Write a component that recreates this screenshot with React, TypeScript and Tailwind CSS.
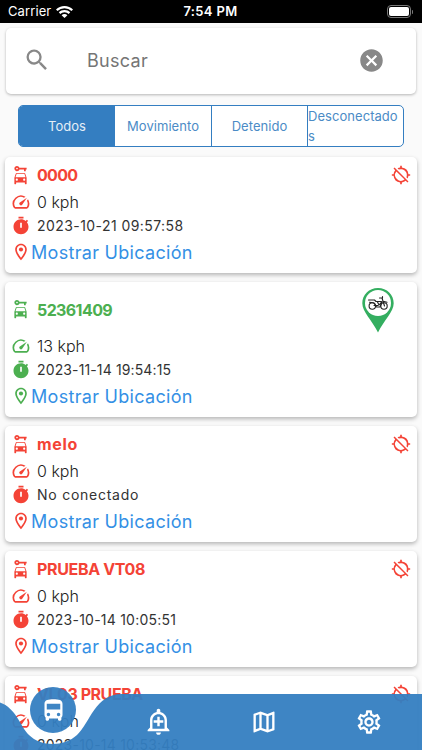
import React from 'react';
import {
    MdSearch,
    MdCancel,
    MdCarRental,
    MdSpeed,
    MdOutlineLocationOn,
    MdLocationDisabled,
    MdDirectionsBus,
    MdOutlineAddAlert,
    MdOutlineMap,
    MdOutlineSettings,
} from 'react-icons/md';

type Device = {
    name: string;
    speed: string;
    date: string;
    online?: boolean;
    nameTracking: string;
    dateTracking: string;
};

const devices: Device[] = [
    { name: '0000', speed: '0 kph', date: '2023-10-21 09:57:58', nameTracking: 'tracking-[-0.7px]', dateTracking: 'tracking-[0.43px]' },
    { name: '52361409', speed: '13 kph', date: '2023-11-14 19:54:15', online: true, nameTracking: 'tracking-[-0.6px]', dateTracking: 'tracking-[0.13px]' },
    { name: 'melo', speed: '0 kph', date: 'No conectado', nameTracking: 'tracking-[0.7px]', dateTracking: 'tracking-[0.75px]' },
    { name: 'PRUEBA VT08', speed: '0 kph', date: '2023-10-14 10:05:51', nameTracking: 'tracking-[-0.35px]', dateTracking: 'tracking-[0.23px]' },
    { name: 'VL03 PRUEBA', speed: '0 kph', date: '2023-10-14 10:53:48', nameTracking: 'tracking-[-0.45px]', dateTracking: 'tracking-[0.23px]' },
];

const TimerIcon: React.FC = () => (
    <svg viewBox="0 0 24 24" className="h-[20px] w-[20px]" fill="currentColor">
        <path d="M9 1h6v2H9zM19.03 7.39l1.42-1.42c-.43-.51-.9-.99-1.41-1.41l-1.42 1.42C16.07 4.74 14.12 4 12 4c-4.97 0-9 4.03-9 9s4.02 9 9 9 9-4.03 9-9c0-2.12-.74-4.07-1.97-5.61zM13 14h-2V8h2v6z" />
    </svg>
);

// Green map pin with a motorbike inside
const BikePin: React.FC = () => (
    <svg viewBox="0 0 34 46" className="h-[46px] w-[34px]">
        <path d="M17 1C8 1 1.300 7.800 1.300 16.200 1.300 25 11 33 17 45.500 23 33 32.700 25 32.700 16.200 32.700 7.800 26 1 17 1Z" fill="#34ae60" />
        <circle cx="17" cy="16" r="13" fill="#fff" />
        <g fill="none" stroke="#222" strokeWidth="1.100" strokeLinecap="round" strokeLinejoin="round">
            <circle cx="11.300" cy="19" r="3.200" />
            <circle cx="23" cy="19" r="3.200" />
            <path d="M7.500 13h6l1.500 1.500h5.500M8.500 15.200l4.500.8 2.500 4h3.500l2-5M18.500 11h3v-1.500M21 11l2.500 8M13 18.500h4M16.500 15l1.500 3 2.500-3M23 14.500l3 .8" />
        </g>
    </svg>
);

const StatusBar: React.FC = () => (
    <div className="grid h-[23px] grid-cols-3 items-center bg-black pl-2 pr-[9px] text-[13px] text-white">
        <div className="flex items-center gap-[5px]">
            <span className="tracking-[0.1px]">Carrier</span>
            <svg viewBox="0 0 17 12" className="h-[12px] w-[17px]" fill="#fff">
                <path d="M8.500 0C5.200 0 2.200 1.300 0 3.400l1.500 1.600a10 10 0 0 1 14 0L17 3.400C14.800 1.300 11.800 0 8.500 0Z" />
                <path d="M8.500 4C6.300 4 4.300 4.900 2.800 6.300l1.500 1.600a6.100 6.100 0 0 1 8.400 0l1.500-1.600C12.700 4.900 10.700 4 8.500 4Z" />
                <path d="M8.500 8c-1.100 0-2.100.4-2.900 1.200L8.500 12l2.900-2.800C10.600 8.400 9.600 8 8.500 8Z" />
            </svg>
        </div>
        <span className="text-center font-semibold tracking-[0.35px]">7:54 PM</span>
        <div className="flex items-center justify-end gap-px">
            <div className="h-[13px] w-[24px] rounded-[4px] border border-[#777] p-[1px]">
                <div className="h-full w-full rounded-[2px] bg-white" />
            </div>
            <div className="h-[4px] w-[1px] rounded-r bg-[#777]" />
        </div>
    </div>
);

const FilterTabs: React.FC = () => (
    <div className="mx-[18px] mt-[11px] grid h-[42px] grid-cols-4 overflow-hidden rounded-[5px] border border-[#347ec1] bg-white text-[13px] leading-[20px] tracking-[0.05px] text-[#4b8bc6]">
        <div className="flex items-center justify-center bg-[#347ec1] pb-[2px] text-[#e4eef7]">Todos</div>
        <div className="flex items-center justify-center pb-[2px]">Movimiento</div>
        <div className="flex items-center justify-center border-l border-[#347ec1] pb-[2px]">Detenido</div>
        <div className="flex items-center border-l border-[#347ec1] pb-[2px]">
            <span>Desconectado<br />s</span>
        </div>
    </div>
);

const DeviceCard: React.FC<{ device: Device }> = ({ device }) => (
    <div className={`flex flex-col rounded-[5px] bg-white pt-1 pb-[7px] shadow-[0_2px_4px_rgba(0,0,0,0.28)] ${device.online ? 'text-[#4caf50]' : 'text-[#f44336]'}`}>
        <div className={`flex items-center pl-[5px] ${device.online ? 'h-[47px]' : 'h-[28px]'}`}>
            <MdCarRental preserveAspectRatio="none" className="mr-[6px] h-[21px] w-[21px]" />
            <span className={`text-[16px] font-bold ${device.nameTracking}`}>{device.name}</span>
            <div className={`ml-auto ${device.online ? 'mr-[22px]' : 'mr-[6px]'}`}>
                {device.online ? <BikePin /> : <MdLocationDisabled className="h-5 w-5" />}
            </div>
        </div>
        <div className="flex h-6 items-center pl-[6px] pt-px">
            <MdSpeed className="mr-[6px] h-[20px] w-[20px]" />
            <span className="text-[16px] font-light text-[#222]">{device.speed}</span>
        </div>
        <div className="flex h-[25px] items-center pl-[6px]">
            <TimerIcon />
            <span className={`ml-[6px] text-[14px] text-[#333] ${device.dateTracking}`}>{device.date}</span>
        </div>
        <div className="flex h-7 items-center pl-[6px]">
            <MdOutlineLocationOn className="h-[20px] w-[20px]" />
            <span className="text-[18px] tracking-[0.3px] text-[#3490e5]">Mostrar Ubicación</span>
        </div>
    </div>
);

const BottomNav: React.FC = () => (
    <div className="absolute inset-x-0 bottom-0 h-[64px] text-white">
        <svg viewBox="0 0 422 64" className="absolute inset-0 h-[64px] w-full">
            <path d="M0 16.500C16 22 20 40 29 49 41 61 64 61 77 49 90 37 95 8 122 8H422V64H0Z" fill="#347ec1" fillOpacity="0.95" />
        </svg>
        <div className="absolute top-[1px] left-[30px] flex h-[46px] w-[46px] items-center justify-center rounded-full bg-[#347ec1]/95">
            <MdDirectionsBus className="h-[27px] w-[27px]" />
        </div>
        <div className="relative grid h-full grid-cols-4 items-center pt-[7px]">
            <span />
            <MdOutlineAddAlert className="mx-auto h-[29px] w-[29px]" />
            <MdOutlineMap className="mx-auto h-[28px] w-[28px]" />
            <MdOutlineSettings className="mx-auto h-[28px] w-[28px]" />
        </div>
    </div>
);

const App: React.FC = () => {
    return (
        <div className="relative h-[750px] w-[422px] overflow-hidden bg-[#fafafa] font-['Inter','Liberation_Sans',sans-serif]">
            <StatusBar />
            <div className="mx-[6px] mt-[5px] flex h-[66px] items-center rounded-[5px] bg-white pl-[17px] pr-[31px] pb-[2px] shadow-[0_1px_3px_rgba(0,0,0,0.28)]">
                <MdSearch className="h-[28px] w-[28px] text-[#888]" />
                <span className="ml-[36px] text-[18px] tracking-[0.3px] text-[#757575]">Buscar</span>
                <MdCancel className="ml-auto h-[27px] w-[27px] text-[#888]" />
            </div>
            <FilterTabs />
            <div className="mx-[5px] mt-[10px] flex flex-col gap-[9px]">
                {devices.map((device) => (
                    <DeviceCard key={device.name} device={device} />
                ))}
            </div>
            <BottomNav />
        </div>
    );
};

export default App;
